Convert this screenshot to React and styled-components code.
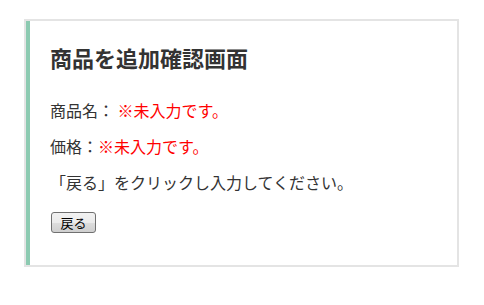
import React from "react";
import styled, { createGlobalStyle } from "styled-components";

const GlobalStyle = createGlobalStyle`
  body {
    margin: 0;
    background: #fff;
    font-family: "Noto Sans CJK JP", "Noto Sans", sans-serif;
    color: #333;
  }
`;

const Page = styled.div`
  padding: 19px 25px 0 24px;
`;

const Panel = styled.div`
  box-sizing: border-box;
  width: 435px;
  height: 248px;
  border: 2px solid #e4e4e4;
  box-shadow: inset 4px 0 0 #8ccab1;
  padding: 21px 24px 0 24px;
`;

const Title = styled.h2`
  margin: 0;
  font-size: 22px;
  line-height: 30px;
  font-weight: bold;
  color: #333;
`;

const Line = styled.p`
  margin: ${(p) => p.$top}px 0 0;
  font-size: 16px;
  line-height: 24px;
  color: #333;
`;

const Warn = styled.span`
  color: #ff0000;
`;

const BackButton = styled.button`
  margin: 18px 0 0 1px;
  width: 45px;
  height: 21px;
  padding: 0;
  font-family: "Noto Sans CJK JP", sans-serif;
  font-size: 13px;
  line-height: 19px;
  color: #000;
  border: 1px solid #707070;
  border-radius: 3px;
  background: linear-gradient(#f2f2f2 0%, #ebebeb 50%, #dddddd 51%, #cfcfcf 100%);
  cursor: pointer;
`;

export default function App() {
  return (
    <>
      <GlobalStyle />
      <Page>
        <Panel>
          <Title>商品を追加確認画面</Title>
          <Line $top={26}>
            商品名： <Warn>※未入力です。</Warn>
          </Line>
          <Line $top={12}>
            価格：<Warn>※未入力です。</Warn>
          </Line>
          <Line $top={12}>「戻る」をクリックし入力してください。</Line>
          <BackButton>戻る</BackButton>
        </Panel>
      </Page>
    </>
  );
}
